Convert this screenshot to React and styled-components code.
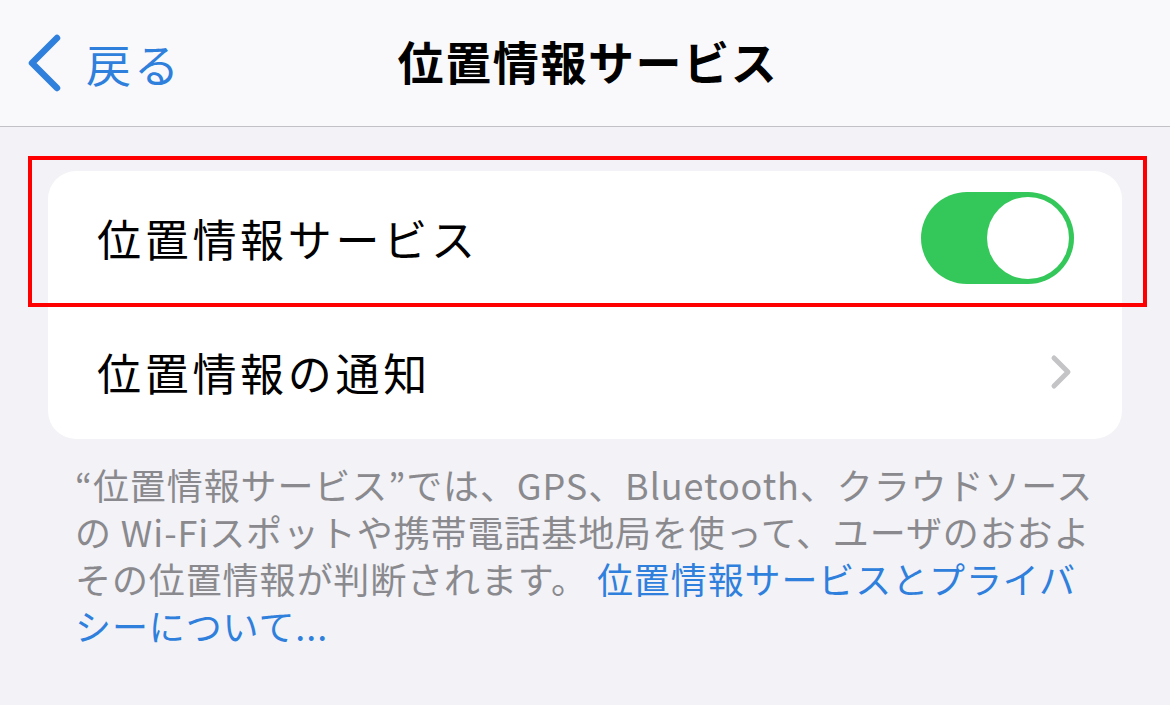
import React from 'react';
import styled, { createGlobalStyle } from 'styled-components';

const GlobalStyle = createGlobalStyle`
  html, body {
    margin: 0;
    padding: 0;
    background: #f2f2f7;
  }
  body {
    font-family: "Noto Sans CJK JP", "Noto Sans", sans-serif;
  }
`;

const Screen = styled.div`
  width: 1170px;
  height: 705px;
  background: #f2f2f7;
  overflow: hidden;
`;

const NavBar = styled.header`
  position: relative;
  height: 126px;
  background: #f9f9fb;
  border-bottom: 1.5px solid #c2c2c6;
  display: flex;
  align-items: center;
  justify-content: center;
`;

const BackButton = styled.div`
  position: absolute;
  left: 26px;
  top: 0;
  bottom: 0;
  display: flex;
  align-items: center;
  gap: 24px;
  color: #2f7fdc;
  font-size: 45px;
  letter-spacing: 3px;
`;

const NavTitle = styled.h1`
  margin: 0;
  font-size: 46px;
  font-weight: 700;
  color: #000;
  letter-spacing: 1.6px;
  margin-top: -6px;
  padding-left: 6px;
`;

const Content = styled.main`
  padding: 44px 48px 0 48px;
`;

const CardWrap = styled.div`
  position: relative;
`;

const Card = styled.section`
  background: #fff;
  border-radius: 28px;
  overflow: hidden;
`;

const Row = styled.div`
  height: 134px;
  display: flex;
  align-items: center;
  justify-content: space-between;
  padding: 0 48px 0 49px;
  position: relative;
  ${({ $divider }) => $divider && `
    &::after {
      content: '';
      position: absolute;
      left: 49px;
      right: 0;
      bottom: 0;
      height: 1.5px;
      background: #c8c8cc;
    }
  `}
`;

const RowLabel = styled.span`
  font-size: 44px;
  color: #000;
  letter-spacing: 3.7px;
`;

const Toggle = styled.div`
  width: 153px;
  height: 92px;
  border-radius: 46px;
  background: #34c759;
  display: flex;
  align-items: center;
  justify-content: flex-end;
  padding: 5px;
  box-sizing: border-box;
`;

const Knob = styled.div`
  width: 82px;
  height: 82px;
  border-radius: 50%;
  background: #fff;
`;

const Highlight = styled.div`
  position: absolute;
  left: -20px;
  top: -15px;
  width: 1119px;
  height: 151px;
  border: 4px solid #ff0000;
  box-sizing: border-box;
  pointer-events: none;
`;

const Footer = styled.p`
  margin: 22px 0 0 27px;
  font-size: 36px;
  line-height: 47px;
  color: #8a8a8e;
  letter-spacing: 0.9px;
`;

const Link = styled.span`
  color: #2f7fdc;
`;

const BackChevron = () => (
  <svg width="36" height="60" viewBox="0 0 36 60">
    <polyline points="31,5 6,30 31,55" fill="none" stroke="#2f7fdc" strokeWidth="6.5" strokeLinecap="round" strokeLinejoin="round" />
  </svg>
);

const RowChevron = () => (
  <svg width="26" height="40" viewBox="0 0 26 40">
    <polyline points="6,6 20,20 6,34" fill="none" stroke="#c4c4c7" strokeWidth="5" strokeLinecap="round" strokeLinejoin="round" />
  </svg>
);

export default function App() {
  return (
    <Screen>
      <GlobalStyle />
      <NavBar>
        <BackButton>
          <BackChevron />
          <span>戻る</span>
        </BackButton>
        <NavTitle>位置情報サービス</NavTitle>
      </NavBar>
      <Content>
        <CardWrap>
          <Card>
            <Row $divider>
              <RowLabel>位置情報サービス</RowLabel>
              <Toggle>
                <Knob />
              </Toggle>
            </Row>
            <Row>
              <RowLabel>位置情報の通知</RowLabel>
              <RowChevron />
            </Row>
          </Card>
          <Highlight />
        </CardWrap>
        <Footer>
          “位置情報サービス”では、GPS、Bluetooth、クラウドソース<br />
          の Wi-Fiスポットや携帯電話基地局を使って、ユーザのおおよ<br />
          その位置情報が判断されます。 <Link>位置情報サービスとプライバ<br />
          シーについて...</Link>
        </Footer>
      </Content>
    </Screen>
  );
}
